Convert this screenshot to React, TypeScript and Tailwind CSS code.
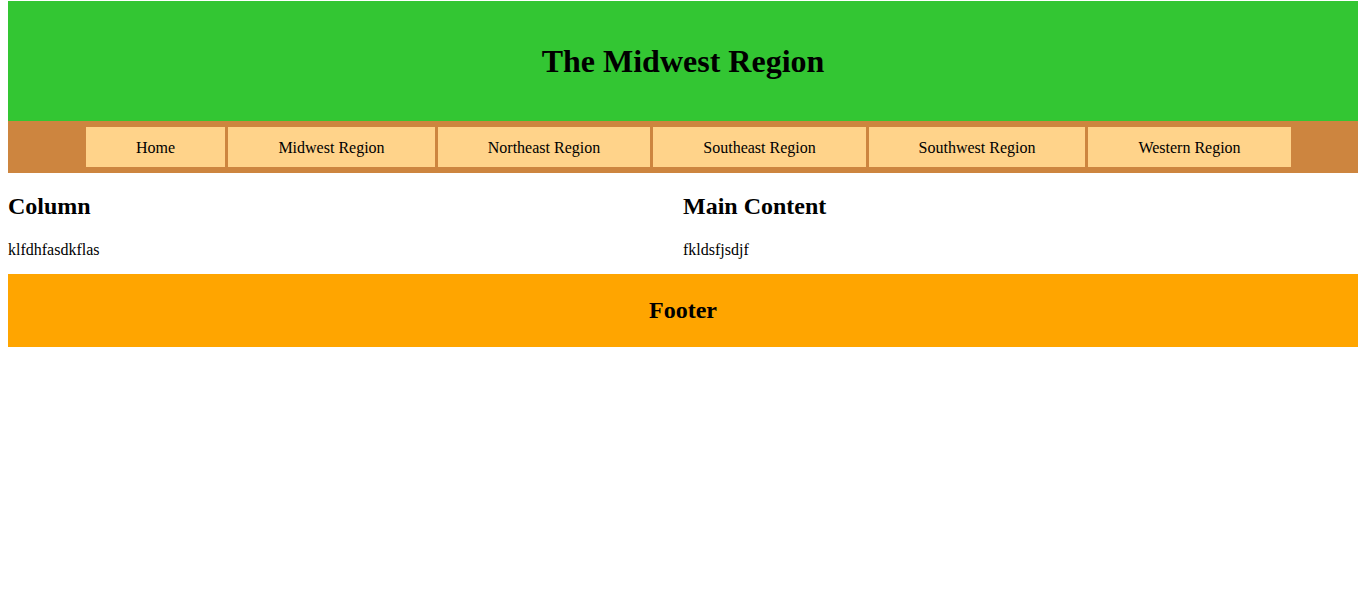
import React from "react";

const items: { label: string; w: string }[] = [
  { label: "Home", w: "w-[139px]" },
  { label: "Midwest Region", w: "w-[207px]" },
  { label: "Northeast Region", w: "w-[212px]" },
  { label: "Southeast Region", w: "w-[213px]" },
  { label: "Southwest Region", w: "w-[216px]" },
  { label: "Western Region", w: "w-[203px]" },
];

export default function App() {
  return (
    <div className="min-h-[610px] bg-white px-2 pt-px text-black" style={{ fontFamily: '"Liberation Serif", "Times New Roman", serif' }}>
      <header className="flex h-[120px] items-center justify-center bg-[#33c633]">
        <h1 className="text-[32px] font-bold leading-[37px]">The Midwest Region</h1>
      </header>
      <nav className="flex h-[52px] items-start gap-[3px] bg-[#cd853f] pl-[78px] pt-[6px]">
        {items.map((it) => (
          <div
            key={it.label}
            className={`${it.w} flex h-[40px] items-center justify-center bg-[#ffd38a] pt-[2px] text-[16px] leading-[18px]`}
          >
            {it.label}
          </div>
        ))}
      </nav>
      <div className="grid grid-cols-2">
        <div>
          <h2 className="mt-[20px] text-[24px] font-bold leading-[27px]">Column</h2>
          <p className="mt-[21px] text-[16px] leading-[18px]">klfdhfasdkflas</p>
        </div>
        <div>
          <h2 className="mt-[20px] text-[24px] font-bold leading-[27px]">Main Content</h2>
          <p className="mt-[21px] text-[16px] leading-[18px]">fkldsfjsdjf</p>
        </div>
      </div>
      <footer className="mt-[15px] flex h-[73px] items-center justify-center bg-[#ffa500]">
        <h2 className="text-[24px] font-bold leading-[27px]">Footer</h2>
      </footer>
    </div>
  );
}
